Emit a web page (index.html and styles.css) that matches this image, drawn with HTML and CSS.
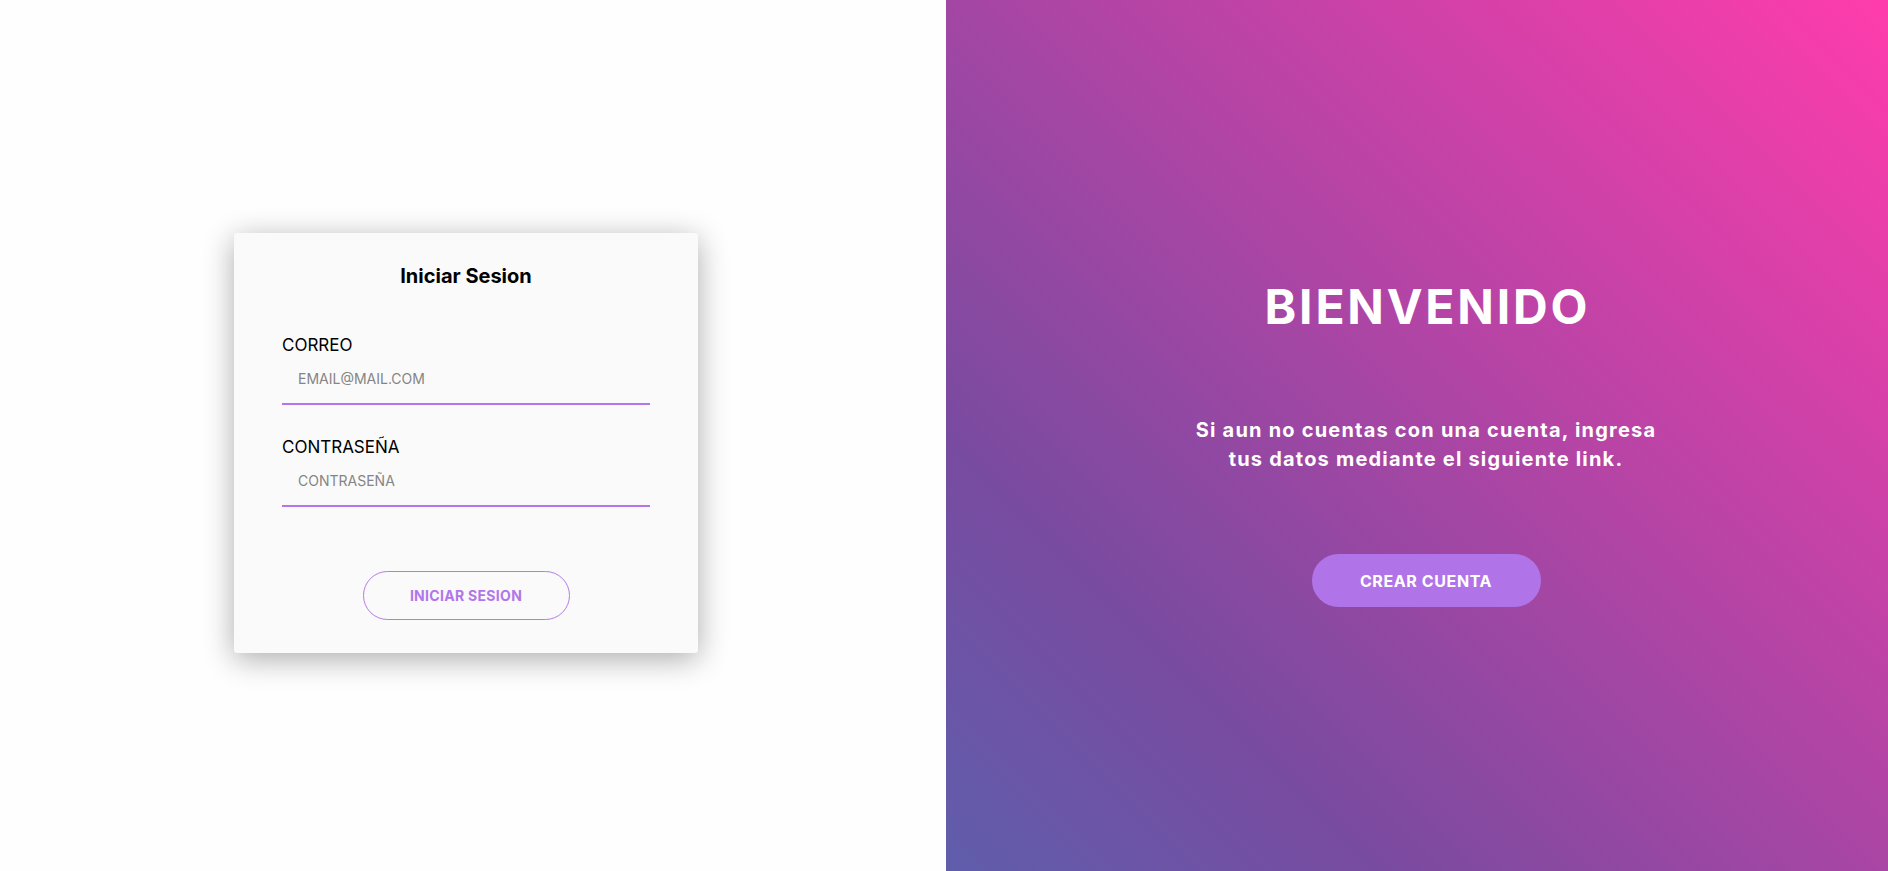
FILE: index.html
```html
<!DOCTYPE html>
<html lang="es">
<head>
<meta charset="utf-8">
<title>Iniciar Sesion</title>
<link rel="stylesheet" href="styles.css">
</head>
<body>
<main class="page">
  <section class="left">
    <form class="card">
      <h2 class="card-title">Iniciar Sesion</h2>
      <div class="field">
        <label class="field-label" for="correo">CORREO</label>
        <input class="field-input" id="correo" type="text" placeholder="EMAIL@MAIL.COM">
      </div>
      <div class="field">
        <label class="field-label" for="pass">CONTRASEÑA</label>
        <input class="field-input" id="pass" type="password" placeholder="CONTRASEÑA">
      </div>
      <div class="actions">
        <button class="btn-outline" type="button">INICIAR SESION</button>
      </div>
    </form>
  </section>
  <section class="right">
    <h1 class="welcome">BIENVENIDO</h1>
    <p class="welcome-text">Si aun no cuentas con una cuenta, ingresa<br>tus datos mediante el siguiente link.</p>
    <button class="btn-fill" type="button">CREAR CUENTA</button>
  </section>
</main>
</body>
</html>
```
FILE: styles.css
```css
* { box-sizing: border-box; }
html, body { margin: 0; padding: 0; }
body {
  font-family: Inter, "Noto Sans", sans-serif;
  background: #fefefe;
  overflow: hidden;
}
.page {
  display: flex;
  height: 871px;
}
.left {
  flex: 0 0 946px;
  display: flex;
  align-items: center;
  justify-content: center;
  padding: 14px 14px 0 0;
  background: #fefefe;
}
.card {
  width: 464px;
  background: #fafafa;
  padding: 31px 48px 33px;
  box-shadow: 0 6px 30px rgba(0, 0, 0, 0.33);
  border-radius: 3px;
}
.card-title {
  margin: 0;
  font-size: 20px;
  line-height: 24px;
  font-weight: 700;
  text-align: center;
  color: #000;
}
.field { margin-top: 47px; }
.field + .field { margin-top: 32px; }
.field-label {
  display: block;
  font-size: 17px;
  line-height: 20px;
  font-weight: 400;
  color: #000;
}
.field-input {
  display: block;
  width: 100%;
  height: 50px;
  padding: 0 16px;
  border: none;
  border-bottom: 2px solid #b176e9;
  background: transparent;
  font-family: inherit;
  font-size: 14px;
  color: #333;
  outline: none;
}
.field-input::placeholder { color: #858585; }
.actions {
  display: flex;
  justify-content: center;
  margin-top: 64px;
}
.btn-outline {
  width: 207px;
  height: 49px;
  border: 1px solid #b47ae9;
  border-radius: 25px;
  background: transparent;
  color: #b176e9;
  font-family: inherit;
  font-size: 14px;
  letter-spacing: 0.3px;
  font-weight: 700;
  cursor: pointer;
}
.right {
  flex: 1;
  display: flex;
  flex-direction: column;
  align-items: center;
  justify-content: center;
  padding: 14px 0 0 18px;
  background: linear-gradient(225deg, #ff3cac 0%, #784ba0 50%, #2b86c5 100%) fixed;
  color: #fff;
  text-align: center;
}
.welcome {
  margin: 0;
  font-size: 48px;
  line-height: 58px;
  font-weight: 700;
  letter-spacing: 2.8px;
  text-indent: 2.8px;
}
.welcome-text {
  margin: 80px 0 0;
  font-size: 20px;
  line-height: 29px;
  font-weight: 700;
  letter-spacing: 1.2px;
}
.btn-fill {
  margin-top: 80px;
  width: 229px;
  height: 53px;
  border: none;
  border-radius: 27px;
  background: #b174e8;
  color: #fff;
  font-family: inherit;
  font-size: 16px;
  letter-spacing: 0.6px;
  font-weight: 700;
  cursor: pointer;
}
```
